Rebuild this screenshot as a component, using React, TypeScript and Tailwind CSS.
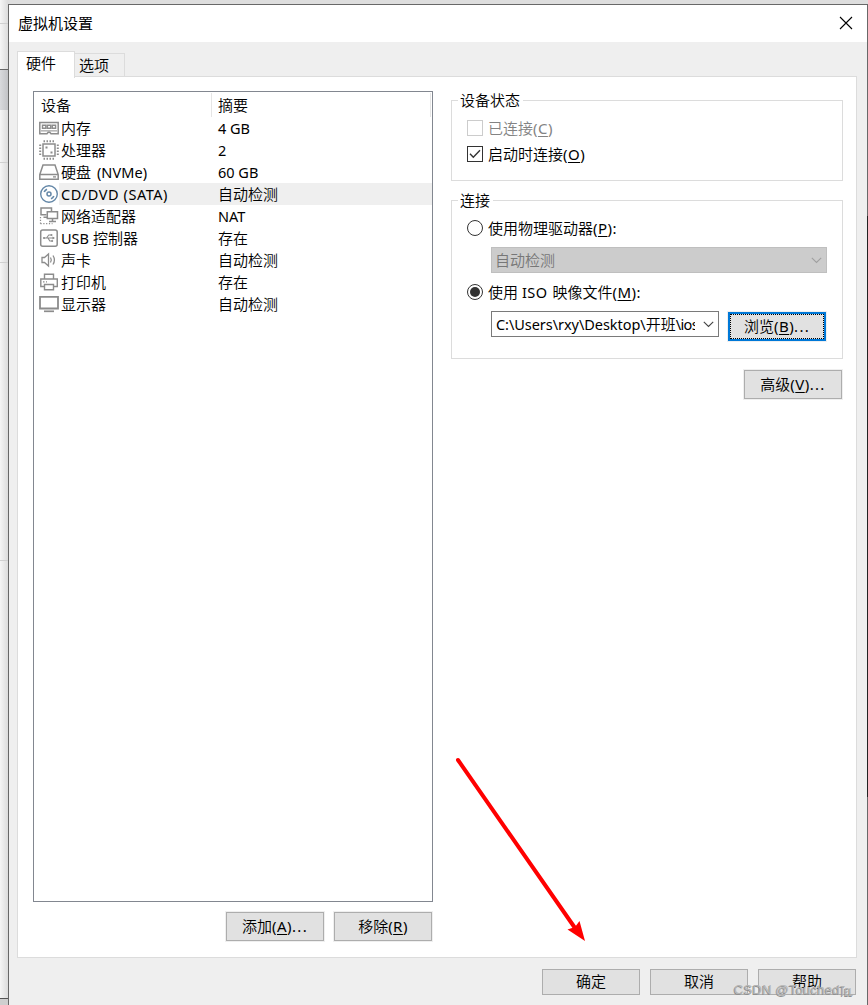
import type { ReactNode } from 'react';
import clsx from 'clsx';

type IconProps = { children: ReactNode; className?: string };

function Glyph({ children, className }: IconProps) {
  return (
    <svg width="20" height="20" viewBox="0 0 20 20" fill="none" stroke="#8c8c8c" strokeWidth="1.5" className={clsx('shrink-0', className)}>
      {children}
    </svg>
  );
}

const icons = {
  memory: (
    <Glyph>
      <path d="M.8 4.500h18.400v11.200H12l-1.200-1.500H9.200L8 15.700H.8z" />
      <path d="M3.500 7.300h3.300v2.900H3.500zM8.400 7.300h3.300v2.900H8.400zM13.300 7.300h3.300v2.900h-3.300z" strokeWidth="1.400" />
      <path d="M2 12.900h16" strokeWidth="1" />
    </Glyph>
  ),
  cpu: (
    <Glyph>
      <rect x="4" y="4" width="12" height="12" />
      <path d="M4.500 1.200h12M4.500 18.800h12M1.200 4.500v12M18.800 4.500v12" strokeWidth="2" strokeDasharray="1.500 1.500" />
      <path d="M6.500 7.500h2M11.500 12.500h2" strokeWidth="2" />
    </Glyph>
  ),
  disk: (
    <Glyph>
      <path d="M.8 12.500 4 3h12l3.200 9.500v4.800H.8zM.8 12.500h18.400" />
      <path d="M14 14.900h3" strokeWidth="1.300" />
    </Glyph>
  ),
  disc: (
    <Glyph>
      <g stroke="#6588a8">
        <circle cx="10" cy="10" r="8.300" fill="#fff" strokeWidth="1.400" />
        <circle cx="10" cy="10" r="2" strokeWidth="1.500" />
        <path d="M5.200 8A5.200 5.200 0 0 1 8 5.200M14.800 12A5.200 5.200 0 0 1 12 14.800" strokeWidth="1.700" />
      </g>
    </Glyph>
  ),
  network: (
    <Glyph>
      <path d="M7.500 8.700H2V2h10.500v3.500M4.500 11.200h4" />
      <path d="M8.300 5.800h10.200v6.700H8.300zM13.500 12.500v2.700M10 15.400h7" />
      <path d="M1.500 11v7M1.500 17.700h12" strokeWidth="1.200" strokeDasharray="1.200 1.600" />
    </Glyph>
  ),
  usb: (
    <Glyph>
      <rect x="1.700" y="1.900" width="16.500" height="16.300" rx="2" />
      <path d="M5 10h10M7.500 10l2.300-3h2.400M9 10l1.800 3h2.200" strokeWidth="1.100" />
      <circle cx="5" cy="10" r="1.100" fill="#8c8c8c" stroke="none" />
      <path d="M13.500 8.500 16 10l-2.500 1.500z" fill="#8c8c8c" stroke="none" />
      <circle cx="12.500" cy="7" r="1" fill="#8c8c8c" stroke="none" />
      <circle cx="13.200" cy="13" r="1" fill="#8c8c8c" stroke="none" />
    </Glyph>
  ),
  sound: (
    <Glyph>
      <path d="M3 7.500h2.500L9.500 4v12l-4-3.500H3z" strokeWidth="1.300" />
      <path d="M11.500 7.500q1.600 2.500 0 5M14 5.500q2.800 4.500 0 9" strokeWidth="1.300" />
    </Glyph>
  ),
  printer: (
    <Glyph>
      <path d="M5.500 7V2.300h9V7M5 14.500H1.800V7h16.500v7.500H15" strokeWidth="1.400" />
      <path d="M5.500 12.500h9v5.300h-9z" strokeWidth="1.400" />
      <path d="M4 9.800h1.500M7 9.800h1" strokeWidth="1.200" />
    </Glyph>
  ),
  display: (
    <Glyph>
      <path d="M1 2.800h18v11.700H1z" strokeWidth="1.800" />
      <path d="M5 17.300h10" strokeWidth="1.700" />
    </Glyph>
  ),
};

function En({ children, className }: { children: ReactNode; className?: string }) {
  return <span className={clsx('text-[14.500px] font-normal', className)}>{children}</span>;
}

function Key({ k, tail }: { k: string; tail?: string }) {
  return (
    <span className="text-[15px] font-normal tracking-[0.450px]">
      (<span className="underline underline-offset-2">{k}</span>){tail && <span className="tracking-[1.300px]">{tail}</span>}
    </span>
  );
}

const devices = [
  { icon: icons.memory, name: '内存', summary: <En>4 GB</En> },
  { icon: icons.cpu, name: '处理器', summary: <En>2</En> },
  { icon: icons.disk, name: <>硬盘 <En className="ml-[2px] tracking-[0.100px]">(NVMe)</En></>, summary: <En>60 GB</En> },
  { icon: icons.disc, name: <En className="tracking-[0.550px]">CD/DVD (SATA)</En>, summary: '自动检测', selected: true },
  { icon: icons.network, name: '网络适配器', summary: <En>NAT</En> },
  { icon: icons.usb, name: <><En>USB</En> 控制器</>, summary: '存在' },
  { icon: icons.sound, name: '声卡', summary: '自动检测' },
  { icon: icons.printer, name: '打印机', summary: '存在' },
  { icon: icons.display, name: '显示器', summary: '自动检测' },
];

function Button({ children, primary, small }: { children: ReactNode; primary?: boolean; small?: boolean }) {
  return (
    <button
      className={clsx(
        'flex w-[98px] shrink-0 bg-[#e1e1e1] ring-1 ring-[#efefef]',
        small ? 'h-[26px]' : 'h-[29px]',
        primary ? 'border-2 border-[#0078d7]' : 'border border-[#adadad]',
      )}
    >
      <span className={clsx('flex h-full w-full items-center justify-center pb-[2px]', primary && 'border border-dotted border-black')}>
        {children}
      </span>
    </button>
  );
}

function Chevron({ color }: { color: string }) {
  return (
    <svg width="11" height="7" viewBox="0 0 11 7" fill="none" stroke={color} strokeWidth="1.100" className="shrink-0">
      <path d="M.8.8l4.700 4.700L10.200.8" />
    </svg>
  );
}

function Group({ title, children, className }: { title: string; children: ReactNode; className?: string }) {
  return (
    <section className={clsx('w-[392px] border border-[#dcdcdc] pl-[15px]', className)}>
      <h2 className="-mt-[12px] -ml-[9px] h-[22px] w-fit bg-white pr-[3px] pl-[2px] leading-[23px]">{title}</h2>
      {children}
    </section>
  );
}

function Radio({ checked }: { checked?: boolean }) {
  return (
    <span className="flex size-4 items-center justify-center rounded-full border border-[#333] bg-white">
      {checked && <span className="size-[10px] rounded-full bg-[#333]" />}
    </span>
  );
}

export default function App() {
  return (
    <div className="relative flex h-[1005px] w-[868px] overflow-hidden bg-[#dedede] font-['Noto_Sans','Noto_Sans_CJK_SC',sans-serif] text-[15px] leading-[22px] font-[350] text-black">
      <div className="flex w-2 shrink-0 flex-col bg-linear-to-r from-[#f6f6f6] to-[#dcdcdc]">
        <div className="h-[24px] border-b border-[#d0d0d0]" />
        <div className="h-[46px] border-b border-[#666]" />
        <div className="h-[40px] bg-linear-to-r from-[#d9dadd] to-[#c2c3c6]" />
        <div className="h-[53px] border-b border-[#d0d0d0]" />
        <div className="h-[100px] border-b border-[#d0d0d0]" />
        <div className="h-[298px] border-b border-[#d0d0d0]" />
        <div className="h-[438px] border-b border-[#555]" />
        <div className="flex-1 bg-[#cfcfcf]" />
      </div>

      <main className="mt-1 flex h-[1001px] w-[859px] shrink-0 flex-col border-t border-l border-[#686868] bg-[#efefef]">
        <header className="flex h-[37px] shrink-0 items-center justify-between bg-white pr-[14px] pl-[9px]">
          <h1 className="-mt-px font-normal">虚拟机设置</h1>
          <svg width="14" height="14" viewBox="0 0 14 14" stroke="#000" strokeWidth="1.100" className="-mt-[2px]">
            <path d="M1 1l12 12M13 1L1 13" />
          </svg>
        </header>

        <nav className="mt-[9px] ml-2 flex h-[26px] shrink-0 items-end">
          <div className="z-10 -mb-px h-[27px] w-[58px] border border-b-0 border-[#dcdcdc] bg-white pl-2 leading-[22px]">硬件</div>
          <div className="-ml-px h-[24px] w-[51px] border border-b-0 border-[#dcdcdc] pl-1 leading-[22px]">选项</div>
        </nav>

        <div className="-mt-px ml-2 flex h-[882px] w-[840px] shrink-0 border border-[#dcdcdc] bg-white">
          <div className="mt-[14px] ml-[15px] w-[400px]">
            <div className="h-[811px] border border-[#828790]">
              <div className="flex h-[25px]">
                <div className="w-[178px] pt-[2px] pl-[7px]">设备</div>
                <div className="-ml-px mt-px h-[24px] w-[220px] border-x border-[#e5e5e5] pt-px pl-[6px]">摘要</div>
              </div>
              {devices.map((d, i) => (
                <div key={i} className="flex h-[22px] items-center pl-[5px] whitespace-pre">
                  {d.icon}
                  <div className={clsx('flex h-[22px] flex-1 items-center', d.selected && 'bg-[#efefef]')}>
                    <div className="w-[159px] pl-[2px]">{d.name}</div>
                    <div>{d.summary}</div>
                  </div>
                </div>
              ))}
            </div>
            <div className="mt-[10px] flex justify-end gap-[10px] pr-px">
              <Button>添加<Key k="A" tail="..." /></Button>
              <Button>移除<Key k="R" /></Button>
            </div>
          </div>

          <div className="mt-[23px] ml-[18px] flex w-[392px] flex-col">
            <Group title="设备状态" className="h-[81px]">
              <div className="mt-[6px] flex h-[22px] items-center gap-[5px] text-[#838383]">
                <span className="size-4 border border-[#ccc] bg-white" />
                <span>已连接<Key k="C" /></span>
              </div>
              <div className="mt-1 flex h-[22px] items-center gap-[5px]">
                <span className="flex size-4 items-center justify-center border border-[#333] bg-white">
                  <svg width="12" height="10" viewBox="0 0 12 10" fill="none" stroke="#333" strokeWidth="1.400">
                    <path d="M1 4.800l3.300 3.400L11 1.300" />
                  </svg>
                </span>
                <span>启动时连接<Key k="O" /></span>
              </div>
            </Group>

            <Group title="连接" className="mt-[19px] h-[159px]">
              <div className="mt-[6px] flex h-[22px] items-center gap-[5px]">
                <Radio />
                <span>使用物理驱动器<Key k="P" tail=":" /></span>
              </div>
              <div className="mt-2 ml-6 flex h-[26px] w-[336px] items-center justify-between border border-[#bfbfbf] bg-[#ccc] pr-1 pl-[3px] text-[#777]">
                自动检测
                <Chevron color="#a0a0a0" />
              </div>
              <div className="mt-2 flex h-[22px] items-center gap-[5px]">
                <Radio checked />
                <span>使用 <En className="mr-px tracking-[0.500px]">ISO</En> 映像文件<Key k="M" tail=":" /></span>
              </div>
              <div className="mt-2 ml-6 flex">
                <div className="flex h-[26px] w-[228px] items-center justify-between border border-[#7a7a7a] bg-white pr-1 pl-1">
                  <span className="w-[199px] overflow-hidden pb-px whitespace-nowrap"><En className="tracking-[-0.050px]">C:\Users\rxy\Desktop\</En>开班<En className="tracking-[-0.600px]">\ios</En></span>
                  <Chevron color="#444" />
                </div>
                <div className="mt-px ml-[9px]">
                  <Button primary>浏览<Key k="B" tail="..." /></Button>
                </div>
              </div>
            </Group>

            <div className="mt-[11px] mr-px self-end">
              <Button>高级<Key k="V" tail="..." /></Button>
            </div>
          </div>
        </div>

        <footer className="mt-[11px] flex justify-end gap-[10px] pr-[11px]">
          <Button small>确定</Button>
          <Button small>取消</Button>
          <Button small>帮助</Button>
        </footer>
      </main>

      <div className="mt-1 flex w-px shrink-0 flex-col bg-[#686868]">
        <div className="mt-[212px] h-[581px] bg-[#222]" />
      </div>

      <svg width="140" height="190" viewBox="0 0 140 190" className="pointer-events-none absolute top-[755px] left-[450px]">
        <path d="M8 5L125 173" stroke="#f00" strokeWidth="4" strokeLinecap="round" />
        <path d="M135 186L117.500 174.500 125 172 129.500 166z" fill="#f00" />
      </svg>
      <div className="absolute top-[982px] left-[734px] flex items-center font-['Liberation_Sans','Noto_Sans_CJK_SC',sans-serif] text-[13px] leading-4 font-normal tracking-[0.250px] whitespace-nowrap text-[#b5b5b5] [text-shadow:-1px_1px_0_#909090]">
        CSDN @Touched<span className="font-['Noto_Sans_CJK_SC',sans-serif] text-[13px]">℡</span>
      </div>
    </div>
  );
}
